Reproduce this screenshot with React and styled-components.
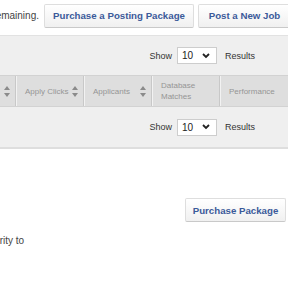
import React from 'react';
import styled, { createGlobalStyle } from 'styled-components';

const GlobalStyle = createGlobalStyle`
  html, body {
    margin: 0;
    padding: 0;
    background: #ffffff;
    overflow: hidden;
  }
  body {
    font-family: "Liberation Sans", Arial, sans-serif;
  }
`;

const Page = styled.div`
  width: 288px;
  height: 288px;
  overflow: hidden;
`;

const TopBar = styled.div`
  display: flex;
  align-items: center;
  justify-content: flex-end;
  height: 31px;
  margin-right: -3px;
  gap: 4px;
  white-space: nowrap;
`;

const Note = styled.span`
  flex-shrink: 0;
  font-size: 10px;
  color: #444;
  margin-right: 1px;
`;

const Button = styled.button`
  flex-shrink: 0;
  width: ${(p) => p.w}px;
  height: 24px;
  padding: 0;
  font-family: "Liberation Sans", Arial, sans-serif;
  font-size: 9.7px;
  font-weight: bold;
  color: #3b5a9a;
  background: linear-gradient(#ffffff, #f0f0f0);
  border: 1px solid #dedede;
  border-bottom-color: #c9c9c9;
  border-radius: 2px;
  white-space: nowrap;
  cursor: pointer;
`;

const Panel = styled.div`
  margin-top: 4px;
  background: #efefef;
  border-top: 1px solid #e2e2e2;
  border-bottom: 2px solid #dedede;
`;

const ShowRow = styled.div`
  display: flex;
  align-items: center;
  justify-content: flex-end;
  height: ${(p) => p.h}px;
  padding-right: 33px;
  gap: 5px;
  font-size: 9px;
  color: #333;
`;

const Select = styled.div`
  display: flex;
  align-items: center;
  justify-content: space-between;
  width: 40px;
  height: 17px;
  box-sizing: border-box;
  padding: 0 6px 0 4px;
  background: #fff;
  border: 1px solid #cdcdcd;
  font-size: 10px;
  color: #222;
  margin-right: 3px;
`;

const Header = styled.div`
  display: flex;
  height: 30px;
  background: #dedede;
  border-top: 1px solid #d2d2d2;
  border-bottom: 1px solid #d2d2d2;
`;

const Cell = styled.div`
  display: flex;
  align-items: center;
  justify-content: space-between;
  flex: 0 0 ${(p) => p.w}px;
  box-sizing: border-box;
  padding: 0 5px 0 ${(p) => (p.first ? 0 : 9)}px;
  border-right: 1px solid #c8c8c8;
  box-shadow: 1px 0 0 #f2f2f2;
  font-size: 8px;
  line-height: 11px;
  color: #959595;
  white-space: nowrap;
`;

const SortIcon = () => (
  <svg width="6" height="11" viewBox="0 0 6 11">
    <path d="M3 0 L6 4 L0 4 Z M0 7 L6 7 L3 11 Z" fill="#8a8a8a" />
  </svg>
);

const Chevron = () => (
  <svg width="8" height="6" viewBox="0 0 8 6">
    <path d="M1 1 L4 4 L7 1" stroke="#222" strokeWidth="1.8" fill="none" />
  </svg>
);

const Lower = styled.div`
  display: flex;
  flex-direction: column;
  align-items: flex-end;
  padding: 49px 2px 0 0;
`;

const Text = styled.div`
  align-self: flex-start;
`;

const Fine = styled.div`
  font-size: 10px;
  color: #444;
  margin-top: 13px;
  margin-left: -17px;
`;

const App = () => (
  <Page>
    <GlobalStyle />
    <TopBar>
      <Note>remaining.</Note>
      <Button w={150}>Purchase a Posting Package</Button>
      <Button w={93}>Post a New Job</Button>
    </TopBar>
    <Panel>
      <ShowRow h={39}>
        Show
        <Select>
          10
          <Chevron />
        </Select>
        Results
      </ShowRow>
      <Header>
        <Cell w={16} first>
          <span />
          <SortIcon />
        </Cell>
        <Cell w={68}>
          Apply Clicks
          <SortIcon />
        </Cell>
        <Cell w={68}>
          Applicants
          <SortIcon />
        </Cell>
        <Cell w={68}>
          <span>
            Database
            <br />
            Matches
          </span>
        </Cell>
        <Cell w={90}>Performance</Cell>
      </Header>
      <ShowRow h={40}>
        Show
        <Select>
          10
          <Chevron />
        </Select>
        Results
      </ShowRow>
    </Panel>
    <Lower>
      <Button w={101}>Purchase Package</Button>
      <Text>
        <Fine>priority to</Fine>
      </Text>
    </Lower>
  </Page>
);

export default App;
